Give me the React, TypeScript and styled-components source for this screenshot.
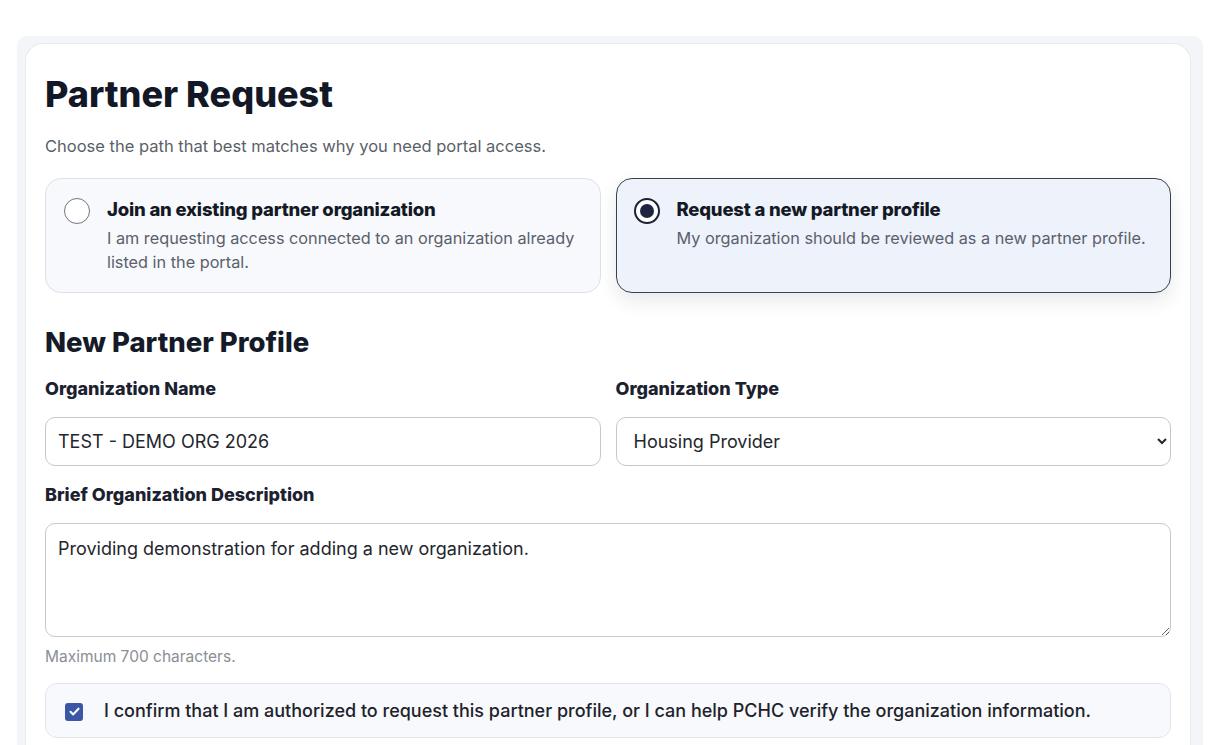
import React, { FC, useState } from 'react';
import styled, { createGlobalStyle } from 'styled-components';

const GlobalStyle = createGlobalStyle`
  html, body {
    margin: 0;
    padding: 0;
    background: #ffffff;
    font-family: Inter, "Noto Sans", "Liberation Sans", sans-serif;
    color: #1b2030;
  }
  * { box-sizing: border-box; }
`;

const Page = styled.div`
  padding: 36px 22px 0 17px;
`;

const Shell = styled.div`
  background: #f3f5f9;
  padding: 7px 12px 0 8px;
  border-radius: 10px 10px 0 0;
`;

const Card = styled.section`
  background: #ffffff;
  border: 1px solid #e7eaf0;
  border-bottom: none;
  border-radius: 18px 18px 0 0;
  padding: 28px 19px 12px;
`;

const Title = styled.h1`
  margin: 0;
  font-size: 36px;
  line-height: 44px;
  font-weight: 800;
  color: #131826;
`;

const Lead = styled.p`
  margin: 19px 0 0;
  font-size: 16.5px;
  line-height: 23px;
  color: #5b5f68;
`;

const Columns = styled.div<{ $top?: number }>`
  display: grid;
  grid-template-columns: 1fr 1fr;
  column-gap: 15px;
  margin-top: ${p => p.$top ?? 0}px;
`;

const Option = styled.label<{ $active?: boolean }>`
  display: flex;
  align-items: flex-start;
  gap: 17px;
  min-height: 114px;
  padding: 18px 18px 18px ${p => (p.$active ? '17px' : '18px')};
  border-radius: 16px;
  cursor: pointer;
  background: ${p => (p.$active ? '#eef2fb' : '#f7f9fc')};
  border: ${p => (p.$active ? '1.5px solid #3a404d' : '1px solid #dde1e8')};
  box-shadow: ${p => (p.$active ? '0 8px 18px rgba(30, 40, 70, 0.10)' : 'none')};
`;

const Radio = styled.span<{ $checked?: boolean }>`
  flex: none;
  width: 26px;
  height: 26px;
  margin-top: 1px;
  border-radius: 50%;
  border: ${p => (p.$checked ? '2.5px solid #1d2233' : '1.5px solid #71757e')};
  background: #ffffff;
  display: flex;
  align-items: center;
  justify-content: center;

  &::after {
    content: '';
    width: 14px;
    height: 14px;
    border-radius: 50%;
    background: #1f2540;
    display: ${p => (p.$checked ? 'block' : 'none')};
  }
`;

const OptionText = styled.div`
  display: flex;
  flex-direction: column;
  gap: 5px;
`;

const OptionTitle = styled.span`
  font-size: 18.5px;
  line-height: 24px;
  font-weight: 800;
  letter-spacing: -0.2px;
  color: #141926;
`;

const OptionDesc = styled.span`
  font-size: 16.25px;
  line-height: 24px;
  color: #5a606c;
`;

const SectionTitle = styled.h2`
  margin: 32px 0 0;
  font-size: 27.5px;
  line-height: 34px;
  font-weight: 800;
  color: #151a28;
`;

const Field = styled.div`
  display: flex;
  flex-direction: column;
  gap: 16px;
`;

const Label = styled.label`
  font-size: 18px;
  line-height: 24px;
  font-weight: 800;
  color: #1c2130;
`;

const TextInput = styled.input`
  height: 49px;
  width: 100%;
  padding: 0 12px;
  border: 1px solid #c6c8cc;
  border-radius: 10px;
  font-family: inherit;
  font-size: 18px;
  color: #23262d;
  background: #fff;
  outline: none;
`;

const Select = styled.select`
  height: 49px;
  width: 100%;
  padding: 0 8px 0 13px;
  border: 1px solid #c6c8cc;
  border-radius: 10px;
  font-family: inherit;
  font-size: 18px;
  color: #23262d;
  background: #fff;
  outline: none;
`;

const TextArea = styled.textarea`
  height: 114px;
  width: 100%;
  padding: 12px 12px;
  border: 1px solid #c6c8cc;
  border-radius: 10px;
  font-family: inherit;
  font-size: 18px;
  line-height: 26px;
  color: #23262d;
  background: #fff;
  outline: none;
  resize: vertical;
`;

const Block = styled.div<{ $top: number }>`
  margin-top: ${p => p.$top}px;
`;

const Hint = styled.p`
  margin: 10px 0 0;
  font-size: 15.5px;
  line-height: 20px;
  color: #8a8e96;
`;

const ConfirmRow = styled.label`
  margin-top: 16px;
  display: flex;
  align-items: center;
  gap: 21px;
  min-height: 55px;
  padding: 0 19px;
  background: #f7f9fc;
  border: 1px solid #e2e6ec;
  border-radius: 12px;
  font-size: 18px;
  font-weight: 500;
  color: #1e222b;
  cursor: pointer;
`;

const Check = styled.span`
  flex: none;
  width: 18px;
  height: 18px;
  margin-top: 2px;
  border-radius: 3px;
  background: #3c56a6;
  display: flex;
  align-items: center;
  justify-content: center;
`;

type PathKey = 'join' | 'new';

const paths: { key: PathKey; title: string; desc: string }[] = [
  {
    key: 'join',
    title: 'Join an existing partner organization',
    desc: 'I am requesting access connected to an organization already listed in the portal.',
  },
  {
    key: 'new',
    title: 'Request a new partner profile',
    desc: 'My organization should be reviewed as a new partner profile.',
  },
];

const App: FC = () => {
  const [path, setPath] = useState<PathKey>('new');
  const [name, setName] = useState('TEST - DEMO ORG 2026');
  const [type, setType] = useState('housing');
  const [desc, setDesc] = useState('Providing demonstration for adding a new organization.');

  return (
    <>
      <GlobalStyle />
      <Page>
        <Shell>
          <Card>
            <Title>Partner Request</Title>
            <Lead>Choose the path that best matches why you need portal access.</Lead>

            <Columns $top={20}>
              {paths.map(item => (
                <Option key={item.key} $active={path === item.key} onClick={() => setPath(item.key)}>
                  <Radio $checked={path === item.key} />
                  <OptionText>
                    <OptionTitle>{item.title}</OptionTitle>
                    <OptionDesc>{item.desc}</OptionDesc>
                  </OptionText>
                </Option>
              ))}
            </Columns>

            <SectionTitle>New Partner Profile</SectionTitle>

            <Columns $top={18}>
              <Field>
                <Label htmlFor="org-name">Organization Name</Label>
                <TextInput id="org-name" value={name} onChange={e => setName(e.target.value)} />
              </Field>
              <Field>
                <Label htmlFor="org-type">Organization Type</Label>
                <Select id="org-type" value={type} onChange={e => setType(e.target.value)}>
                  <option value="housing">Housing Provider</option>
                  <option value="health">Health Provider</option>
                  <option value="community">Community Organization</option>
                </Select>
              </Field>
            </Columns>

            <Block $top={17}>
              <Field>
                <Label htmlFor="org-desc">Brief Organization Description</Label>
                <TextArea id="org-desc" value={desc} onChange={e => setDesc(e.target.value)} />
              </Field>
            </Block>
            <Hint>Maximum 700 characters.</Hint>

            <ConfirmRow>
              <Check>
                <svg width="13" height="13" viewBox="0 0 12 12" fill="none">
                  <path d="M2.3 6.3 L4.8 8.7 L9.7 3.4" stroke="#fff" strokeWidth="1.9" strokeLinecap="round" strokeLinejoin="round" />
                </svg>
              </Check>
              I confirm that I am authorized to request this partner profile, or I can help PCHC verify the organization information.
            </ConfirmRow>
          </Card>
        </Shell>
      </Page>
    </>
  );
};

export default App;
